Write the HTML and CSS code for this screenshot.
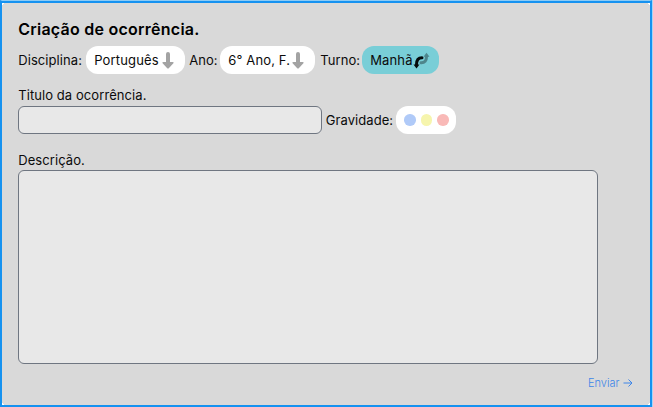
FILE: index.html
```html
<!DOCTYPE html>
<html lang="pt-BR">
<head>
<meta charset="utf-8">
<title>Criação de ocorrência</title>
<link rel="stylesheet" href="styles.css">
</head>
<body>
<main class="frame">
  <form class="card">
    <h1 class="title">Criação de ocorrência.</h1>
    <div class="filters">
      <span class="label label-subject">Disciplina:</span>
      <button type="button" class="pill pill-subject"><span class="pill-text">Português</span>
        <svg class="arrow" viewBox="0 0 12 17"><path d="M4 2a2 2 0 0 1 4 0v8h2.600q1.800 0 .8 1.200L7 16q-1 1-2 0L.6 11.200Q-.4 10 1.400 10H4z"/></svg>
      </button>
      <span class="label label-year">Ano:</span>
      <button type="button" class="pill pill-year"><span class="pill-text">6° Ano, F.</span>
        <svg class="arrow" viewBox="0 0 12 17"><path d="M4 2a2 2 0 0 1 4 0v8h2.600q1.800 0 .8 1.200L7 16q-1 1-2 0L.6 11.200Q-.4 10 1.400 10H4z"/></svg>
      </button>
      <span class="label label-shift">Turno:</span>
      <button type="button" class="pill pill-shift"><span class="pill-text">Manhã</span>
        <svg class="swap" viewBox="0 0 17 17"><g class="swap-up"><path d="M8 10.800Q13.500 11 13.500 4.500"/><path class="head" d="M13.500 .8l3 4h-6z"/></g><g class="swap-down"><path d="M9 5.700Q3.500 5.700 3.500 12.500"/><path class="head" d="M3.500 16.500L.5 12.500h6z"/></g></svg>
      </button>
    </div>
    <label class="label heading" for="name">Titulo da ocorrência.</label>
    <div class="name-row">
      <input class="field name" id="name">
      <span class="label label-severity">Gravidade:</span>
      <div class="pill severity"><i class="dot blue"></i><i class="dot yellow"></i><i class="dot red"></i></div>
    </div>
    <label class="label heading heading-desc" for="desc">Descrição.</label>
    <textarea class="field desc" id="desc"></textarea>
    <button type="button" class="send"><span>Enviar</span><svg class="send-arrow" viewBox="0 0 10 10"><path d="M.5 5h8.500M5.500 1.500L9 5 5.500 8.500"/></svg></button>
  </form>
</main>
</body>
</html>
```

FILE: styles.css
```css
* { box-sizing: border-box; }
body { margin: 0; background: #fff; font-family: Inter, sans-serif; color: #0b0b0b; }
.frame {
  width: 652px;
  height: 407px;
  border: 2px solid #1692f0;
  border-top: 1px solid #8ccbf5;
  box-shadow: 1px 0 #a5d5f7;
  background: #1692f0;
}
.card {
  display: flex;
  flex-direction: column;
  align-items: flex-start;
  height: 402px;
  margin-top: 2px;
  padding: 16px 16px 0 16.200px;
  background:
    linear-gradient(135deg, #fff 2px, transparent 2px),
    linear-gradient(225deg, #fff 2px, transparent 2px),
    linear-gradient(45deg, #fff 2px, transparent 2px),
    linear-gradient(315deg, #fff 2px, #d9d9d9 2px);
}
.title { margin: 0; font-size: 16px; line-height: 20px; font-weight: 600; letter-spacing: .25px; color: #000; white-space: nowrap; }
.filters { display: flex; align-items: center; height: 28px; margin-top: 7px; }
.label { flex: none; font-size: 13px; line-height: 16px; letter-spacing: .08px; white-space: nowrap; }
.label-subject { width: 68px; }
.label-year { width: 31px; margin-left: 4px; }
.label-shift { width: 42px; margin-left: 5px; }
.pill {
  display: flex;
  flex: none;
  align-items: center;
  height: 28px;
  padding: 0 0 0 8px;
  border: 0;
  border-radius: 12px;
  background: #fff;
  font: 13px/16px Inter, sans-serif;
  letter-spacing: .15px;
  color: #0b0b0b;
}
.pill-text { flex: none; white-space: nowrap; text-align: left; }
.pill-subject { width: 99px; }
.pill-year { width: 95px; }
.pill-shift { width: 77px; background: #79ced7; }
.pill-subject .pill-text { width: 68px; }
.pill-year .pill-text { width: 64px; }
.pill-shift .pill-text { width: 43px; }
.arrow { flex: none; width: 12px; height: 17px; fill: #a3a3a3; }
.swap { flex: none; width: 17px; height: 17px; fill: none; stroke-width: 3; stroke-linecap: round; }
.swap-up { stroke: #4e858b; }
.swap-down { stroke: #050a0b; }
.swap .head { stroke: none; }
.swap-up .head { fill: #4e858b; }
.swap-down .head { fill: #050a0b; }
.heading { margin-top: 13px; }
.name-row { display: flex; align-items: center; height: 28px; margin-top: 3px; }
.field { display: block; margin: 0; padding: 4px 8px; border: 1px solid #6f7681; border-radius: 6px; background: #e8e8e8; font: 13px Inter, sans-serif; outline: 0; resize: none; }
.name { width: 304px; height: 28px; }
.label-severity { width: 70.500px; margin-left: 3.500px; }
.severity { width: 60px; gap: 5px; }
.dot { width: 11.500px; height: 11.500px; border-radius: 50%; }
.blue { background: #b0caf8; }
.yellow { background: #f6f5ad; }
.red { background: #f9b9b7; }
.heading-desc { margin-top: 18px; }
.desc { width: 580px; height: 194px; margin-top: 2px; }
.send { display: flex; align-items: center; align-self: flex-end; width: 46px; height: 14px; margin-top: 12px; padding: 0; border: 0; background: none; font: 300 11px/14px Inter, sans-serif; color: #3e86e8; }
.send span { width: 35px; text-align: left; }
.send-arrow { flex: none; width: 10px; height: 10px; fill: none; stroke: #3e86e8; stroke-width: 1; }
```
